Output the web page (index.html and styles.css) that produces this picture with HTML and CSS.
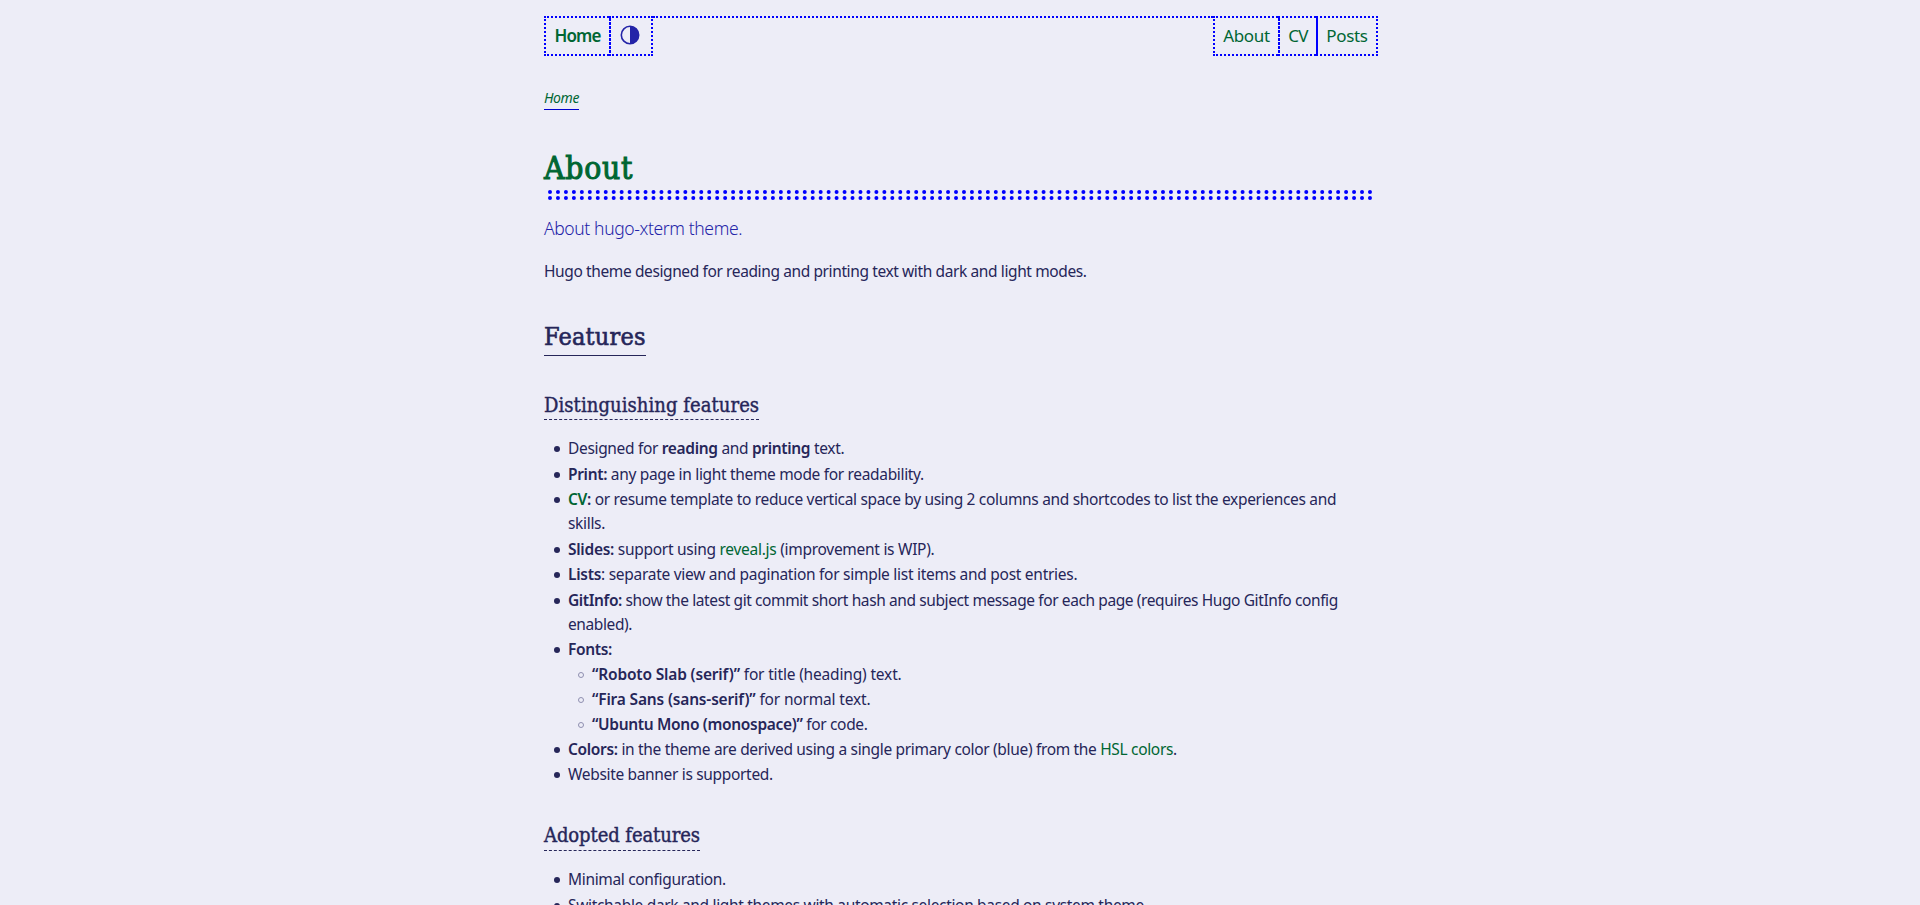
FILE: index.html
```html
<!DOCTYPE html>
<html lang="en">
<head>
<meta charset="utf-8">
<title>About</title>
<link rel="stylesheet" href="styles.css">
</head>
<body>
<div class="page">
  <nav class="nav">
    <ul class="nav-group">
      <li class="nav-item nav-home"><a href="#"><b>Home</b></a></li>
      <li class="nav-item nav-toggle"><svg class="toggle-icon" viewBox="0 0 20 20"><circle cx="10" cy="10" r="8.7"/><path d="M10 1.3a8.7 8.7 0 0 1 0 17.4z"/></svg></li>
    </ul>
    <div class="nav-line"></div>
    <ul class="nav-group">
      <li class="nav-item nav-about"><a href="#">About</a></li>
      <li class="nav-item nav-cv"><a href="#">CV</a></li>
      <li class="nav-item nav-posts"><a href="#">Posts</a></li>
    </ul>
  </nav>
  <div class="breadcrumb"><a href="#">Home</a></div>
  <main>
    <h1 class="title"><a href="#">About</a></h1>
    <div class="rule"></div>
    <p class="subtitle">About hugo-xterm theme.</p>
    <p class="text">Hugo theme designed for reading and printing text with dark and light modes.</p>
    <h2 class="section">Features</h2>
    <h3 class="sub">Distinguishing features</h3>
    <ul class="list">
      <li>Designed for <b>reading</b> and <b>printing</b> text.</li>
      <li><b>Print:</b> any page in light theme mode for readability.</li>
      <li><b><a href="#">CV</a>:</b> or resume template to reduce vertical space by using 2 columns and shortcodes to list the experiences and<br>skills.</li>
      <li class="wide"><b>Slides:</b> support using <a href="#">reveal.js</a> (improvement is WIP).</li>
      <li class="wide"><b>Lists</b>: separate view and pagination for simple list items and post entries.</li>
      <li class="narrow"><b>GitInfo:</b> show the latest git commit short hash and subject message for each page (requires Hugo GitInfo config<br>enabled).</li>
      <li class="parent"><b>Fonts:</b>
        <ul class="sublist">
          <li class="wider"><b>“Roboto Slab (serif)”</b> for title (heading) text.</li>
          <li class="wider"><b>“Fira Sans (sans-serif)”</b> for normal text.</li>
          <li><b>“Ubuntu Mono (monospace)”</b> for code.</li>
        </ul>
      </li>
      <li class="tight"><b>Colors:</b> in the theme are derived using a single primary color (blue) from the <a href="#">HSL colors</a>.</li>
      <li class="tight">Website banner is supported.</li>
    </ul>
    <h3 class="sub sub-next">Adopted features</h3>
    <ul class="list">
      <li>Minimal configuration.</li>
      <li>Switchable dark and light themes with automatic selection based on system theme.</li>
    </ul>
  </main>
</div>
</body>
</html>
```
FILE: styles.css
```css
*, *::before { box-sizing: border-box; }
body {
  margin: 0;
  height: 905px;
  overflow: hidden;
  background: #ededf7;
  color: #262659;
  font: 15.5px/24px "Noto Sans", "Open Sans", sans-serif;
  letter-spacing: -.33px;
}
a { color: #006633; text-decoration: none; }
b { font-weight: 600; }
ul { margin: 0; padding: 0; list-style: none; }
.page { width: 834px; margin-left: 544px; padding-top: 16px; }

.nav { display: flex; height: 40px; }
.nav-group { display: flex; }
.nav-line { flex: 1; height: 2px; border-top: 2px dotted #00f; }
.nav-item {
  display: flex; align-items: center; justify-content: center;
  height: 40px; border: 2px dotted #00f;
  font-size: 17px;
}
.nav-home { width: 65px; border-right: 0; letter-spacing: -.9px; }
.nav-toggle, .nav-cv { border-left: 0; background: repeating-linear-gradient(#00f 0 3px, transparent 3px 4px) left top / 2px 100% no-repeat; }
.nav-toggle { width: 44px; padding-bottom: 2px; }
.nav-about { width: 65px; border-right: 0; }
.nav-cv { width: 38px; border-right: 0; padding-left: 2px; letter-spacing: -.8px; }
.nav-posts { width: 62px; border-left-style: solid; }
.toggle-icon { width: 20px; height: 20px; }
.toggle-icon circle { fill: none; stroke: #2424a8; stroke-width: 1.6; }
.toggle-icon path { fill: #2424a8; }

.breadcrumb { margin-top: 30px; height: 24px; font-size: 14px; font-style: italic; letter-spacing: -.4px; }
.breadcrumb a { display: inline-block; height: 24px; border-bottom: 1px solid #00c; }

.title, .section, .sub { font-family: "DejaVu Serif Condensed", "DejaVu Serif", serif; font-stretch: condensed; font-weight: 400; letter-spacing: .07px; -webkit-text-stroke: .4px; }
.title { margin: 37px 0 0; font-size: 31.5px; line-height: 42px; height: 43px; letter-spacing: .8px; -webkit-text-stroke: 1px; }
.rule { height: 10px; margin: 0 5px 0 4px; border: dotted #00f; border-width: 4px 0; }
.subtitle { margin: 16px 0 0; font-size: 17.5px; font-weight: 300; color: #2424a8; letter-spacing: -.38px; }
.text { margin: 19px 0 0; letter-spacing: -.39px; }
.section { width: fit-content; margin: 34px 0 0; height: 39px; font-size: 25px; line-height: 40px; letter-spacing: .22px; border-bottom: 1px solid; -webkit-text-stroke: .6px; }
.sub { width: fit-content; margin: 34px 0 16px; height: 30px; font-size: 20px; line-height: 30px; border-bottom: 1px dashed; }
.sub-next { line-height: 28px; letter-spacing: -.08px; }
.list { padding-left: 24px; }
.list li { padding-bottom: 1.5px; }
.list li::before {
  content: ""; display: inline-block; width: 6px; height: 6px;
  margin: 0 8px 2px -14px; border-radius: 50%; background: #262659;
}
.list .parent { padding-bottom: 0; }
.list .tight { padding-bottom: 1px; }
.list .wide { letter-spacing: -.28px; }
.list .wider { letter-spacing: -.17px; }
.list .narrow { letter-spacing: -.4px; }
.sublist { padding: 1px 0 0 24px; }
.list .sublist li { padding-bottom: 1px; }
.list .sublist li::before { background: none; border: 1px solid #8f8fb0; }
```
